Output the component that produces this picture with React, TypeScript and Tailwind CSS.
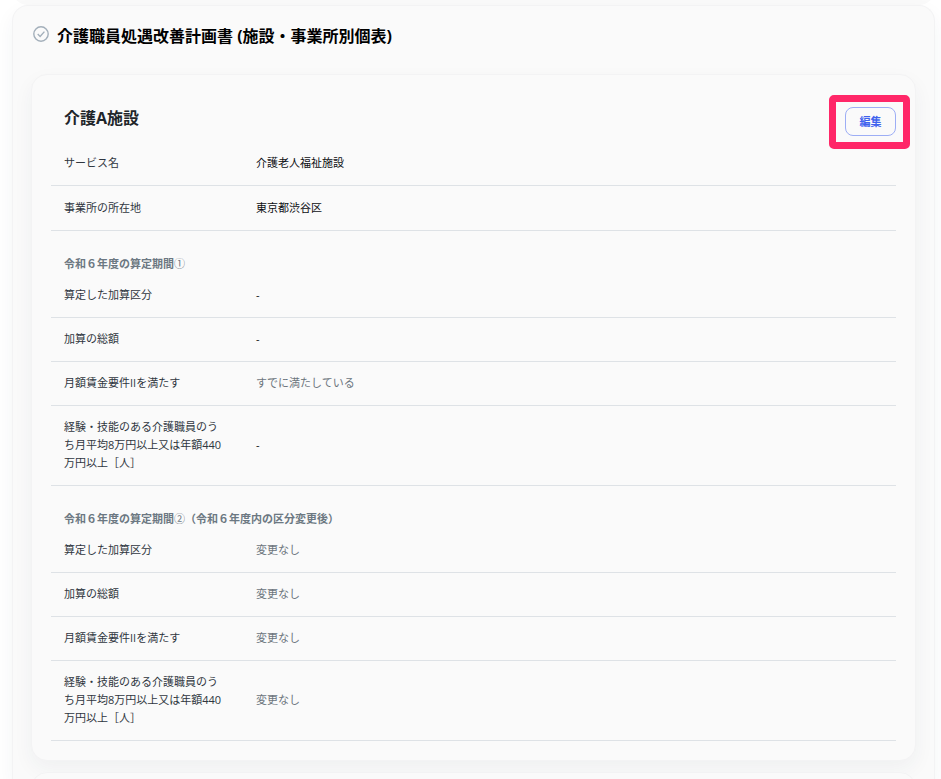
import React from 'react';
import { clsx } from 'clsx';

interface IRow {
  label: string;
  value: string;
  muted?: boolean;
}

interface ISection {
  title: string;
  mark: string;
  note?: string;
  rows: IRow[];
}

const LONG_LABEL = '経験・技能のある介護職員のうち月平均8万円以上又は年額440万円以上［人］';

const basicRows: IRow[] = [
  { label: 'サービス名', value: '介護老人福祉施設' },
  { label: '事業所の所在地', value: '東京都渋谷区' },
];

const sections: ISection[] = [
  {
    title: '令和６年度の算定期間',
    mark: '①',
    rows: [
      { label: '算定した加算区分', value: '-' },
      { label: '加算の総額', value: '-' },
      { label: '月額賃金要件IIを満たす', value: 'すでに満たしている', muted: true },
      { label: LONG_LABEL, value: '-' },
    ],
  },
  {
    title: '令和６年度の算定期間',
    mark: '②',
    note: '（令和６年度内の区分変更後）',
    rows: [
      { label: '算定した加算区分', value: '変更なし', muted: true },
      { label: '加算の総額', value: '変更なし', muted: true },
      { label: '月額賃金要件IIを満たす', value: '変更なし', muted: true },
      { label: LONG_LABEL, value: '変更なし', muted: true },
    ],
  },
];

function CheckIcon() {
  return (
    <svg className="size-4 shrink-0 text-[#a3afba]" viewBox="0 0 16 16" fill="none" stroke="currentColor" aria-hidden="true">
      <circle cx="8" cy="8" r="7.2" strokeWidth="1.4" />
      <path d="M4.7 8.1 7.1 10.4 11.4 5.6" strokeWidth="1.4" />
    </svg>
  );
}

function InfoTable({ rows, title, roomy }: { rows: IRow[]; title: string; roomy?: boolean }) {
  const cell = clsx('border-b border-[#dee2e6] pl-[13px] align-middle', roomy ? 'py-[13px]' : 'pt-3 pb-[13px]');

  return (
    <table className="w-full table-fixed border-separate border-spacing-0 text-left text-[11px] leading-[18px]" aria-label={title}>
      <colgroup>
        <col className="w-48" />
        <col />
      </colgroup>
      <tbody>
        {rows.map((row) => (
          <tr key={row.label}>
            <th scope="row" className={clsx(cell, 'pr-[15px] font-normal text-[#2f3640]')}>
              {row.label}
            </th>
            <td className={clsx(cell, 'pr-[13px]', row.muted ? 'text-[#6c757d]' : 'text-[#0c0e12]')}>
              {row.value}
            </td>
          </tr>
        ))}
      </tbody>
    </table>
  );
}

export default function App() {
  return (
    <div className="flex min-h-screen flex-col bg-white pr-1.5 pl-3 font-['Open_Sans','Noto_Sans_CJK_JP',sans-serif]" lang="ja">
      {/* tail of the previous panel */}
      <div className="flex h-[5px] items-end overflow-hidden">
        <div className="h-10 w-full shrink-0 rounded-2xl bg-[#fafafa]" />
      </div>

      <main className="flex-1 rounded-t-2xl border border-b-0 border-[#f3f3f4] bg-[#fafafa] px-[18px] shadow-[0_8px_20px_rgba(40,50,70,0.05)]">
        <div className="flex gap-2 pt-[18px] pl-0.5">
          <div className="pt-0.5">
            <CheckIcon />
          </div>
          <h1 className="text-base leading-6 font-bold text-black">
            介護職員処遇改善計画書 (施設・事業所別個表)
          </h1>
        </div>

        <section className="mt-[26px] rounded-2xl border border-[#f3f3f4] bg-[#fafafa] px-[19px] pt-8 pb-[19px] shadow-[0_8px_20px_rgba(40,50,70,0.05)]">
          <div className="flex items-start justify-between pb-[5px] pl-[13px]">
            <h2 className="text-base leading-[22px] font-bold text-[#212529]">介護A施設</h2>
            <div className="relative">
              <button
                type="button"
                className="block h-[29px] w-[51px] cursor-pointer rounded-lg border border-[#9daef5] text-[11px] leading-4 font-bold text-[#3f63ee]"
              >
                編集
              </button>
              <div className="pointer-events-none absolute -top-3 -right-3.5 -bottom-[13px] -left-4 rounded-[5px] border-[7px] border-[#ff2768]" />
            </div>
          </div>

          <InfoTable rows={basicRows} title="介護A施設" roomy />

          {sections.map((section) => (
            <div key={section.mark} className="pt-6">
              <h3 className="mb-px pl-[13px] text-[11px] leading-[18px] font-bold text-[#6c7882]">
                {section.title}
                <span className="font-normal">{section.mark}</span>
                {section.note}
              </h3>
              <InfoTable rows={section.rows} title={section.title + section.mark} />
            </div>
          ))}
        </section>

        {/* top edge of the next card */}
        <div className="mt-[11px] h-[7px] overflow-hidden">
          <div className="h-16 rounded-2xl border border-[#f3f3f4] bg-[#fafafa]" />
        </div>
      </main>
    </div>
  );
}
